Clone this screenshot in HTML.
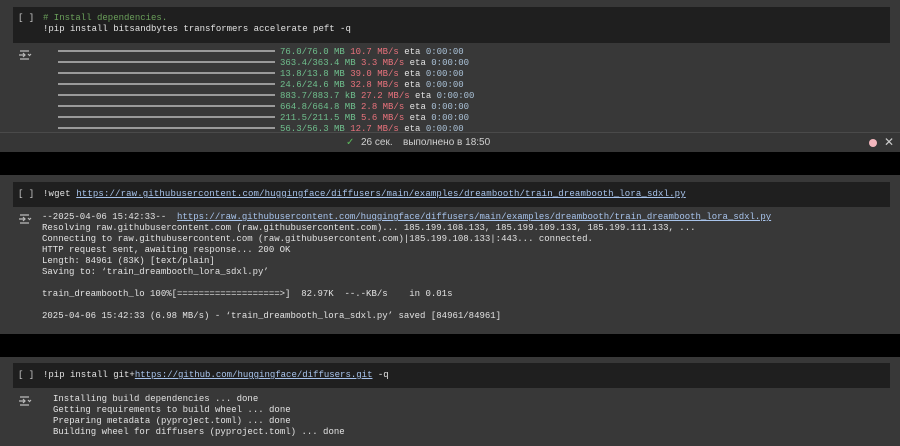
<!DOCTYPE html>
<html><head><meta charset="utf-8"><style>
*{margin:0;padding:0;box-sizing:border-box}
body{width:900px;height:446px;background:#383838;overflow:hidden;position:relative;font-family:"Liberation Mono","DejaVu Sans Mono",monospace;font-size:9px;color:#e2e2e2}
.abs{position:absolute}
.ed{position:absolute;left:13px;width:877px;background:#1f1f1f}
.br{position:absolute;left:18px;color:#c8c8c8;font-size:9px}
pre{font-family:inherit;font-size:9px;line-height:11px;white-space:pre;position:absolute}
.g{color:#6fbf8d}.r{color:#e8727c}.b{color:#a9c0d6}.c{color:#6a9f5a}
a{color:#a8c4ec;text-decoration:underline}
.bar{display:inline-block;width:217px;height:2px;background:#9a9a9a;vertical-align:middle;margin-right:5px;position:relative;top:-1px}
.ic{position:absolute;left:19px;width:13px;height:10px}
</style></head><body>
<div class="ed" style="top:7px;height:36px"></div>
<div class="br" style="top:13px">[ ]</div>
<pre style="left:43px;top:13px"><span class="c"># Install dependencies.</span>
!pip install bitsandbytes transformers accelerate peft -q</pre>
<svg class="ic" style="top:50px" viewBox="0 0 13 10"><path d="M1 1h9M1 9h9M0 5h6M4 3l2 2-2 2M9 4l1.5 1.5L12 4" stroke="#bbb" stroke-width="1.2" fill="none"/></svg>
<pre style="left:58px;top:47px;height:86px;overflow:hidden"><span class="bar"></span><span class="g">76.0/76.0 MB</span> <span class="r">10.7 MB/s</span> eta <span class="b">0:00:00</span>
<span class="bar"></span><span class="g">363.4/363.4 MB</span> <span class="r">3.3 MB/s</span> eta <span class="b">0:00:00</span>
<span class="bar"></span><span class="g">13.8/13.8 MB</span> <span class="r">39.0 MB/s</span> eta <span class="b">0:00:00</span>
<span class="bar"></span><span class="g">24.6/24.6 MB</span> <span class="r">32.8 MB/s</span> eta <span class="b">0:00:00</span>
<span class="bar"></span><span class="g">883.7/883.7 kB</span> <span class="r">27.2 MB/s</span> eta <span class="b">0:00:00</span>
<span class="bar"></span><span class="g">664.8/664.8 MB</span> <span class="r">2.8 MB/s</span> eta <span class="b">0:00:00</span>
<span class="bar"></span><span class="g">211.5/211.5 MB</span> <span class="r">5.6 MB/s</span> eta <span class="b">0:00:00</span>
<span class="bar"></span><span class="g">56.3/56.3 MB</span> <span class="r">12.7 MB/s</span> eta <span class="b">0:00:00</span></pre>
<div class="abs" style="left:0;top:132px;width:900px;height:20px;background:#363636;border-top:1px solid #4a4a4a;font-family:'Liberation Sans',sans-serif;font-size:10px;color:#d0d0d0">
<span class="abs" style="left:346px;top:4px;color:#5cb85c">✓</span>
<span class="abs" style="left:361px;top:4px">26 сек.</span>
<span class="abs" style="left:403px;top:4px">выполнено в 18:50</span>
<span class="abs" style="left:869px;top:6px;width:8px;height:8px;border-radius:50%;background:#f2b6bd"></span>
<span class="abs" style="left:884px;top:2px;font-size:12px;color:#ccc">✕</span>
</div>
<div class="abs" style="left:0;top:152px;width:900px;height:23px;background:#000"></div>
<div class="ed" style="top:182px;height:25px"></div>
<div class="br" style="top:189px">[ ]</div>
<pre style="left:43px;top:189px;letter-spacing:0.14px">!wget <a>https://raw.githubusercontent.com/huggingface/diffusers/main/examples/dreambooth/train_dreambooth_lora_sdxl.py</a></pre>
<svg class="ic" style="top:214px" viewBox="0 0 13 10"><path d="M1 1h9M1 9h9M0 5h6M4 3l2 2-2 2M9 4l1.5 1.5L12 4" stroke="#bbb" stroke-width="1.2" fill="none"/></svg>
<pre style="left:42px;top:212px">--2025-04-06 15:42:33--  <a>https://raw.githubusercontent.com/huggingface/diffusers/main/examples/dreambooth/train_dreambooth_lora_sdxl.py</a>
Resolving raw.githubusercontent.com (raw.githubusercontent.com)... 185.199.108.133, 185.199.109.133, 185.199.111.133, ...
Connecting to raw.githubusercontent.com (raw.githubusercontent.com)|185.199.108.133|:443... connected.
HTTP request sent, awaiting response... 200 OK
Length: 84961 (83K) [text/plain]
Saving to: ‘train_dreambooth_lora_sdxl.py’

train_dreambooth_lo 100%[===================>]  82.97K  --.-KB/s    in 0.01s

2025-04-06 15:42:33 (6.98 MB/s) - ‘train_dreambooth_lora_sdxl.py’ saved [84961/84961]</pre>
<div class="abs" style="left:0;top:334px;width:900px;height:23px;background:#000"></div>
<div class="ed" style="top:363px;height:25px"></div>
<div class="br" style="top:370px">[ ]</div>
<pre style="left:43px;top:370px">!pip install git+<a>https://github.com/huggingface/diffusers.git</a> -q</pre>
<svg class="ic" style="top:396px" viewBox="0 0 13 10"><path d="M1 1h9M1 9h9M0 5h6M4 3l2 2-2 2M9 4l1.5 1.5L12 4" stroke="#bbb" stroke-width="1.2" fill="none"/></svg>
<pre style="left:53px;top:394px">Installing build dependencies ... done
Getting requirements to build wheel ... done
Preparing metadata (pyproject.toml) ... done
Building wheel for diffusers (pyproject.toml) ... done</pre>
</body></html>
